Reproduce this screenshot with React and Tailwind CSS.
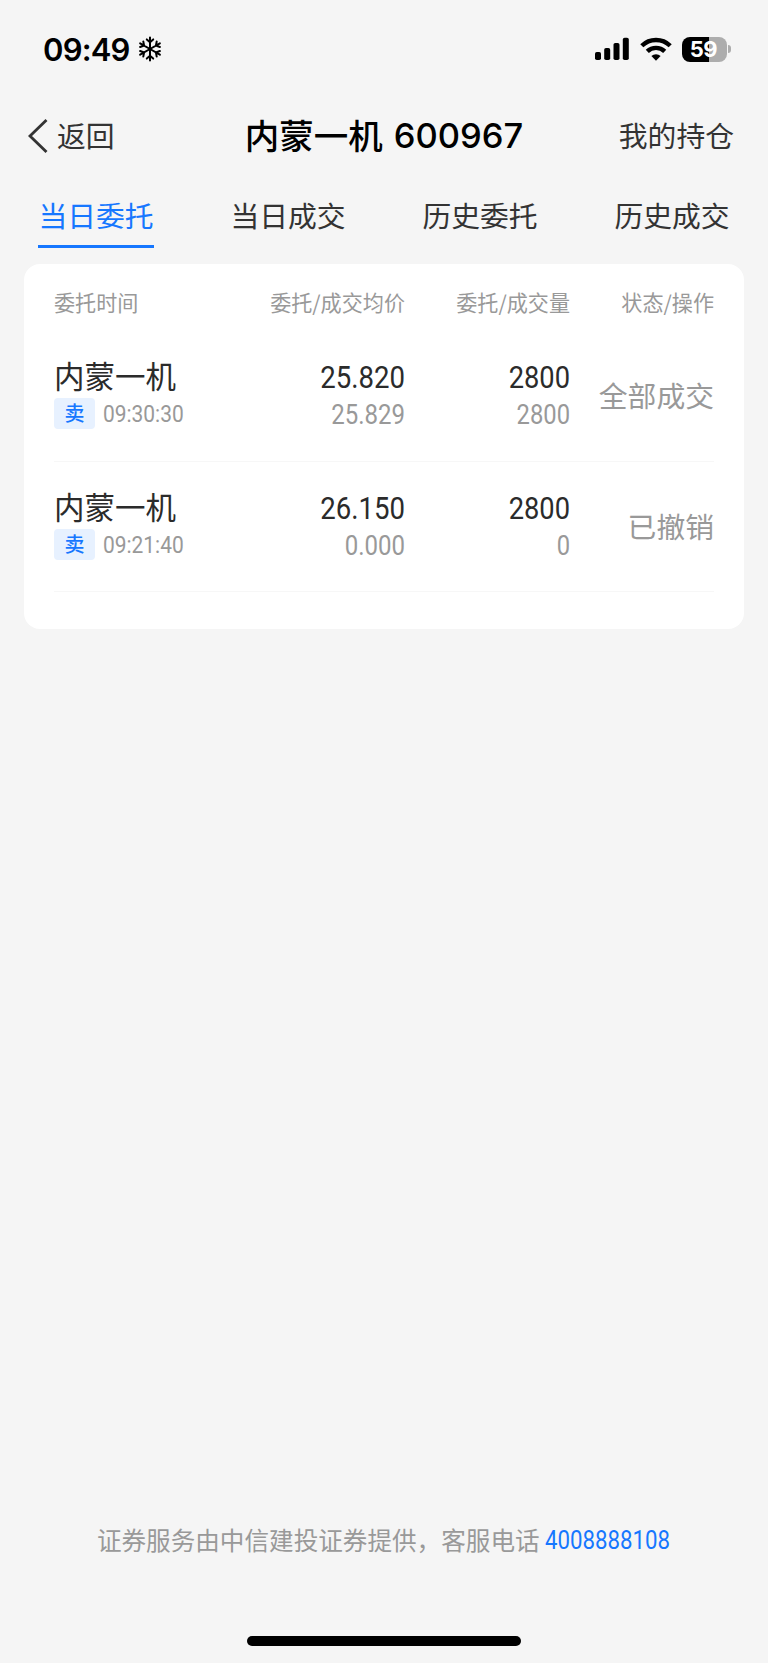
const tabs = ["当日委托", "当日成交", "历史委托", "历史成交"];

const orders = [
  { name: "内蒙一机", time: "09:30:30", price: "25.820", avg: "25.829", qty: "2800", filled: "2800", status: "全部成交" },
  { name: "内蒙一机", time: "09:21:40", price: "26.150", avg: "0.000", qty: "2800", filled: "0", status: "已撤销" },
];

const StatusBar = () => (
  <div className="flex h-[98px] items-center justify-between pl-[43px] pr-[37px]">
    <div className="flex items-center gap-[8px]">
      <span className="font-['Inter'] text-[31px] leading-none font-semibold tracking-[-0.8px]">09:49</span>
      {/* Focus mode snowflake */}
      <svg width="24" height="26" viewBox="-12 -13 24 26" fill="none" stroke="black" strokeWidth="2" strokeLinecap="round" strokeLinejoin="round">
        {[0, 60, 120, 180, 240, 300].map((deg) => (
          <path key={deg} transform={`rotate(${deg})`} d="M0 0V-11.4M-3.2 -9.6L0 -6.8L3.2 -9.6" />
        ))}
      </svg>
    </div>
    <div className="flex items-center">
      <svg width="34" height="24" viewBox="0 0 34 24">
        <rect x="0" y="15" width="6" height="8" rx="1.8" />
        <rect x="9.2" y="11" width="6" height="12" rx="1.8" />
        <rect x="18.5" y="6" width="6" height="17" rx="1.8" />
        <rect x="27.8" y="0.7" width="6" height="22.3" rx="1.8" />
      </svg>
      <svg className="ml-[11px]" width="32" height="24" viewBox="0 0 32 24" fill="none" stroke="black" strokeWidth="4.4">
        <path d="M1.8 8.8A20.2 20.2 0 0 1 30.2 8.8" />
        <path d="M7.3 14.4A12.4 12.4 0 0 1 24.7 14.4" />
        <path d="M16 23.7L11.4 19A6.6 6.6 0 0 1 20.6 19Z" fill="black" stroke="none" />
      </svg>
      <div className="ml-[10px] flex h-[25px] w-[45px] items-center justify-center rounded-[8px] bg-[linear-gradient(90deg,#000_60%,#adadad_60%)]">
        <span className="-ml-[2px] font-['Inter'] text-[22px] leading-none font-bold tracking-[-0.5px] text-white">59</span>
      </div>
      <div className="ml-[1px] h-[8px] w-[3px] rounded-r-full bg-[#adadad]" />
    </div>
  </div>
);

const Header = () => (
  <div className="grid h-[76px] grid-cols-[1fr_auto_1fr] items-center pl-[28px] pr-[34px] text-[28.8px] leading-none text-[#333]">
    <div className="flex items-center">
      <svg width="20" height="34" viewBox="0 0 20 34" fill="none" stroke="#333" strokeWidth="2.8">
        <path d="M18.5 1L2 17L18.5 33" />
      </svg>
      <span className="ml-[9px] pb-[2px]">返回</span>
    </div>
    <h1 className="flex items-center pl-[6px] text-[34.5px] font-medium text-black">
      <span className="pb-[3px]">内蒙一机</span>
      <span className="ml-[11px] pt-[1px] font-['Inter']">600967</span>
    </h1>
    <span className="pb-[2px] text-right">我的持仓</span>
  </div>
);

const OrderRow = ({ order }) => (
  <div className="flex h-[130.6px] border-b border-[#f7f7f7] pt-[24px]">
    <div className="w-[170px]">
      <div className="h-[42px] text-[30.5px] leading-[40px] text-[#2b2b2b]">{order.name}</div>
      <div className="mt-[1px] flex h-[31px] items-center">
        <span className="flex h-[31px] w-[41px] items-center justify-center rounded-[4px] bg-[#e7f1ff] pb-[1px] text-[20px] leading-none font-medium text-[#1677ff]">卖</span>
        <span className="ml-[8px] w-[90px] origin-left scale-x-[0.91] pt-[2px] font-['Roboto'] text-[23px] leading-none text-[#999]">{order.time}</span>
      </div>
    </div>
    <div className="w-[181px] origin-right scale-x-[0.89] pt-[3px] text-right font-['Roboto']">
      <div className="text-[31px] leading-[40px] text-[#2b2b2b]">{order.price}</div>
      <div className="text-[27px] leading-[34px] text-[#999]">{order.avg}</div>
    </div>
    <div className="w-[165px] origin-right scale-x-[0.88] pt-[3px] text-right font-['Roboto']">
      <div className="text-[31px] leading-[40px] text-[#2b2b2b]">{order.qty}</div>
      <div className="text-[27px] leading-[34px] text-[#999]">{order.filled}</div>
    </div>
    <div className="flex-1 pt-[20px] text-right text-[28.8px] leading-[40px] text-[#999]">{order.status}</div>
  </div>
);

const App = () => {
  return (
    <div className="flex h-[1663px] w-[768px] flex-col bg-[#f5f5f5] font-['Noto_Sans_CJK_SC',sans-serif] text-black">
      <StatusBar />
      <Header />
      <nav className="grid h-[90px] grid-cols-4 justify-items-center text-[28.8px] leading-[44px] text-[#333]">
        {tabs.map((tab, i) => (
          <div key={tab} className={i === 0 ? "h-[74px] border-b-[3px] border-[#1677ff] pt-[19px] text-[#1677ff]" : "h-[74px] pt-[19px]"}>
            {tab}
          </div>
        ))}
      </nav>

      <main className="mx-[24px] h-[365px] rounded-[16px] bg-white px-[30px]">
        <div className="flex h-[67px] pt-[23px] text-[21.1px] leading-[30px] text-[#999]">
          <span className="w-[170px]">委托时间</span>
          <span className="w-[181px] text-right">委托/成交均价</span>
          <span className="w-[165px] text-right">委托/成交量</span>
          <span className="flex-1 text-right">状态/操作</span>
        </div>
        {orders.map((order) => (
          <OrderRow key={order.time} order={order} />
        ))}
      </main>

      <footer className="mt-auto flex flex-col items-center">
        <p className="flex h-[40px] items-center text-[24.6px] leading-none text-[#999]">
          <span className="pb-[2px]">证券服务由中信建投证券提供，客服电话</span>
          <span className="-mr-[14px] ml-[5px] origin-left scale-x-[0.89] font-['Roboto'] text-[25px] text-[#1677ff]">4008888108</span>
        </p>
        <div className="mt-[76px] mb-[17px] h-[10px] w-[274px] rounded-full bg-black" />
      </footer>
    </div>
  );
};

export default App;
